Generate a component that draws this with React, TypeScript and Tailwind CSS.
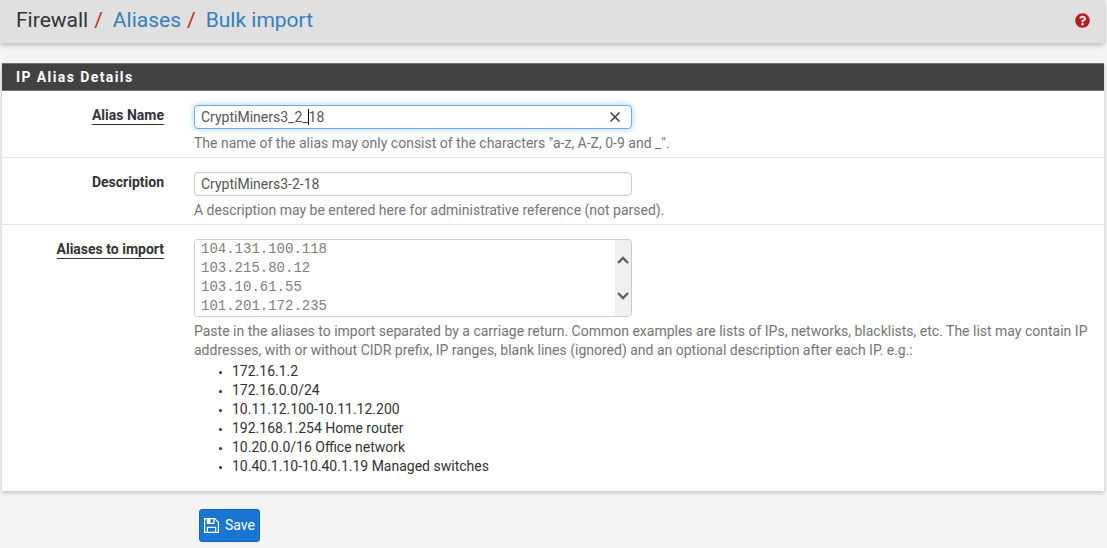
import { ReactNode } from 'react';
import { X } from 'lucide-react';
import { FaQuestionCircle } from 'react-icons/fa';

const IMPORT_LIST = `104.131.100.118
103.215.80.12
103.10.61.55
101.201.172.235`;

const EXAMPLES = [
  '172.16.1.2',
  '172.16.0.0/24',
  '10.11.12.100-10.11.12.200',
  '192.168.1.254 Home router',
  '10.20.0.0/16 Office network',
  '10.40.1.10-10.40.1.19 Managed switches',
];

interface FormRowProps {
  id: string;
  label: string;
  required?: boolean;
  children: ReactNode;
}

function FormRow({ id, label, required, children }: FormRowProps) {
  return (
    <div className="flex border-b border-[#e3e3e3] pt-[14px] pr-2 pb-1 pl-4 last:border-b-0 last:pb-[15px]">
      <div className="w-[146px] shrink-0 text-right">
        <label
          htmlFor={id}
          className={
            required
              ? 'inline-block border-b border-[#333333] font-bold leading-[17px] text-[#333333]'
              : 'inline-block font-bold leading-[17px] text-[#333333]'
          }
        >
          {label}
        </label>
      </div>
      <div className="min-w-0 flex-1 pl-[30px]">{children}</div>
    </div>
  );
}

function HelpText({ children }: { children: ReactNode }) {
  return <p className="mt-[5px] leading-[19px] text-[#757575]">{children}</p>;
}

function SaveIcon() {
  return (
    <svg width="15" height="15" viewBox="0 0 15 15" fill="none" stroke="#fff" strokeWidth="1.2">
      <path d="M0.6 0.6H10.7L14.4 4.3V14.4H0.6Z" />
      <path d="M3.4 14V9.4H11.6V14" />
      <path d="M3.4 1V5.4H9.9V1" />
      <path d="M3.4 1H6.4V5H3.4Z" fill="#fff" stroke="none" />
    </svg>
  );
}

export default function App() {
  return (
    <div className="min-h-screen bg-[#f4f4f4] font-['Roboto',sans-serif] text-[14px] text-[#333333]">
      {/* breadcrumb */}
      <header className="mr-[3px] flex h-[43px] items-center justify-between bg-[#e0e0e0] pr-[14px] pb-[3px] pl-4 shadow-[0_2px_5px_rgba(0,0,0,0.26)]">
        <nav className="flex text-[21px] leading-6">
          <span>Firewall</span>
          <span className="ml-[6px] text-[#c62828]">/</span>
          <a href="#aliases" className="ml-[10px] text-[#337fc0]">
            Aliases
          </a>
          <span className="ml-[6px] text-[#c62828]">/</span>
          <a href="#import" className="ml-[10px] text-[#337fc0]">
            Bulk import
          </a>
        </nav>
        <button type="button" aria-label="Help" className="text-[#b71c1c]">
          <FaQuestionCircle size={15} />
        </button>
      </header>

      <form onSubmit={(e) => e.preventDefault()}>
        <section className="mt-5 mr-[3px] ml-[2px] bg-white shadow-[0_2px_4px_rgba(0,0,0,0.2)]">
          <h2 className="border-y border-[#757575] bg-[#424242] px-[14px] py-[3px] text-[14px] leading-5 font-bold tracking-widest text-white">
            IP Alias Details
          </h2>

          <FormRow id="name" label="Alias Name" required>
            <div className="relative w-[438px] max-w-full">
              <input
                id="name"
                type="text"
                defaultValue="CryptiMiners3_2_18"
                className="block h-6 w-full rounded-[4px] border border-[#66afe9] bg-white px-[6px] text-[#555555] shadow-[0_0_6px_rgba(102,175,233,0.6)] outline-none"
              />
              <span className="absolute top-1 left-[114px] h-4 w-px bg-black" />
              <button type="button" aria-label="Clear" className="absolute top-1 right-[9px] text-[#424242]">
                <X size={16} strokeWidth={2.5} />
              </button>
            </div>
            <HelpText>
              The name of the alias may only consist of the characters "a-z, A-Z, 0-9 and _".
            </HelpText>
          </FormRow>

          <FormRow id="descr" label="Description">
            <input
              id="descr"
              type="text"
              defaultValue="CryptiMiners3-2-18"
              className="block h-6 w-[438px] max-w-full rounded-[4px] border border-[#cccccc] bg-white px-[6px] text-[#555555] outline-none"
            />
            <HelpText>
              A description may be entered here for administrative reference (not parsed).
            </HelpText>
          </FormRow>

          <FormRow id="aliases" label="Aliases to import" required>
            <div className="flex h-[78px] w-[438px] max-w-full overflow-hidden rounded-[4px] border border-[#cccccc] bg-white">
              <textarea
                id="aliases"
                defaultValue={IMPORT_LIST}
                className="block min-w-0 flex-1 resize-none overflow-hidden bg-white px-[6px] font-['Liberation_Mono',monospace] text-[14px] leading-[19px] text-[#808080] outline-none"
              />
              <div className="flex w-4 flex-col items-center justify-center gap-7 bg-[#f0f0f0]">
                <svg width="12" height="8" viewBox="0 0 12 8" fill="none" stroke="#606060" strokeWidth="2.4">
                  <path d="M1 7L6 2L11 7" />
                </svg>
                <svg width="12" height="8" viewBox="0 0 12 8" fill="none" stroke="#606060" strokeWidth="2.4">
                  <path d="M1 1L6 6L11 1" />
                </svg>
              </div>
            </div>
            <HelpText>
              Paste in the aliases to import separated by a carriage return. Common examples are lists of
              IPs, networks, blacklists, etc. The list may contain IP addresses, with or without CIDR
              prefix, IP ranges, blank lines (ignored) and an optional description after each IP. e.g.:
            </HelpText>
            <ul className="mt-[2px] list-disc pl-[38px] leading-[19px] marker:text-[10px]">
              {EXAMPLES.map((example) => (
                <li key={example}>{example}</li>
              ))}
            </ul>
          </FormRow>
        </section>

        <button
          type="submit"
          className="mt-[18px] ml-[199px] flex h-[33px] items-center gap-[6px] rounded-[3px] border border-[#1565c0] bg-[#1976d2] px-1 text-white"
        >
          <SaveIcon />
          Save
        </button>
      </form>
    </div>
  );
}
